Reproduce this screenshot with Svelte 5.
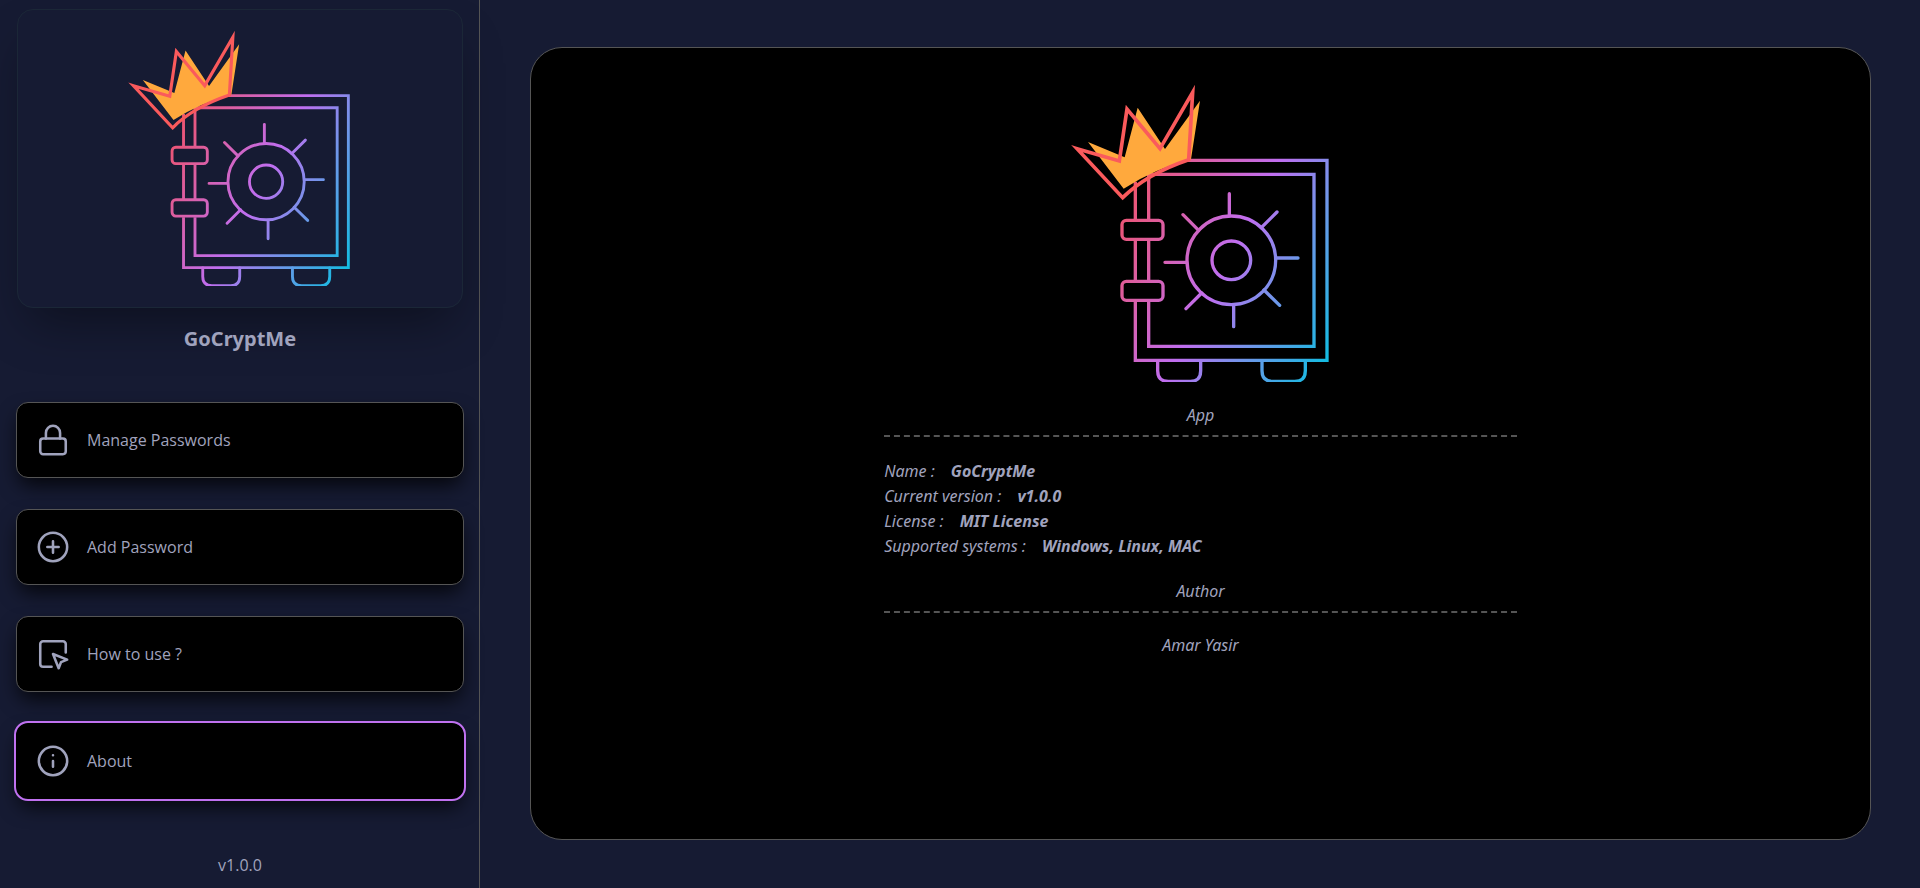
<script>
  let active = $state('About');

  const items = ['Manage Passwords', 'Add Password', 'How to use ?', 'About'];

  const details = [
    ['Name', 'GoCryptMe'],
    ['Current version', 'v1.0.0'],
    ['License', 'MIT License'],
    ['Supported systems', 'Windows, Linux, MAC'],
  ];
</script>

{#snippet logo(id)}
  <svg class="logo" viewBox="4 0 900 936" role="img" aria-label="GoCryptMe logo">
    <defs>
      <linearGradient id={id} gradientUnits="userSpaceOnUse" x1="337" y1="174" x2="1012" y2="523">
        <stop offset="0" stop-color="#ee5470" />
        <stop offset="0.47" stop-color="#c06ef0" />
        <stop offset="0.7" stop-color="#7295ea" />
        <stop offset="1" stop-color="#14bce2" />
      </linearGradient>
    </defs>
    <g fill="none" stroke="url(#{id})" stroke-width="10" stroke-linecap="round">
      <path d="M415 271H832V871H257V695M257 632V511M257 448V335" stroke-linecap="butt" />
      <path d="M297 448V313H793V829H297V695M297 511V632" stroke-linecap="butt" />
      <rect x="217" y="451" width="123" height="57" rx="13" />
      <rect x="217" y="634" width="123" height="57" rx="13" />
      <path d="M324 872V902Q324 934 356 934H422Q453 934 453 902V872M637 872V902Q637 934 669 934H735Q767 934 767 902V872" />
      <circle cx="545" cy="571" r="133" />
      <circle cx="545" cy="571" r="58" />
      <path d="M539 371V436M682 426L635 473M745 564H680M690 706L643 660M552 770V706M409 716L456 669M346 577H411M400 434L447 481" />
    </g>
    <path fill="#ffa93d" d="M115 216L225 262L264 113L346 237L451 92L424 268Q316 296 222 356Z" />
    <path fill="none" stroke="#fa5a5c" stroke-width="11" stroke-miterlimit="10" d="M82 236L209 273L232 117L331 236L429 67L417 269Q290 312 219 383Z" />
  </svg>
{/snippet}

<div class="app">
  <aside>
    <div class="brand">{@render logo('side-gradient')}</div>
    <h1>GoCryptMe</h1>
    <nav>
      {#each items as item, i}
        <button type="button" class:active={active === item} onclick={() => (active = item)}>
          <svg class="icon" viewBox="0 0 24 24" aria-hidden="true">
            {#if i === 0}
              <rect x="3" y="11" width="18" height="11" rx="2" />
              <path d="M7 11V7a5 5 0 0 1 10 0v4" />
            {:else if i === 1}
              <circle cx="12" cy="12" r="10" />
              <path d="M8 12h8M12 8v8" />
            {:else if i === 2}
              <path d="M21 11V5a2 2 0 0 0-2-2H5a2 2 0 0 0-2 2v14a2 2 0 0 0 2 2h6" />
              <path d="m12 12 4 10 1.700-4.300L22 16Z" />
            {:else}
              <circle cx="12" cy="12" r="10" />
              <path d="M12 16v-4M12 8h.01" />
            {/if}
          </svg>
          <span>{item}</span>
        </button>
      {/each}
    </nav>
    <p class="version">v1.0.0</p>
  </aside>

  <main>
    <section class="panel">
      {@render logo('main-gradient')}
      <div class="about">
        <h2>App</h2>
        <ul>
          {#each details as [label, value]}
            <li><span>{label} :</span><strong>{value}</strong></li>
          {/each}
        </ul>
        <h2>Author</h2>
        <p>Amar Yasir</p>
      </div>
    </section>
  </main>
</div>

<style>
  :global(body) {
    margin: 0;
    background: #161b33;
  }

  .app {
    display: grid;
    grid-template-columns: 1fr 3fr;
    min-height: 100vh;
    color: #a0a3bd;
    font: 16px/24px 'Noto Sans', 'Open Sans', sans-serif;
  }

  * {
    box-sizing: border-box;
  }

  h1,
  h2,
  p,
  ul {
    margin: 0;
    padding: 0;
  }

  .logo {
    display: block;
  }

  aside {
    display: flex;
    flex-direction: column;
    padding: 9px 15px 11px 16px;
    border-right: 1px solid #555;
  }

  .brand {
    display: flex;
    justify-content: center;
    margin: 0 1px;
    padding: 8px 0 21px;
    border: 1px solid #1b2737;
    border-radius: 16px;
    box-shadow: 0 25px 50px -12px rgb(0 0 0 / 0.4);
  }

  .brand .logo {
    width: 258px;
  }

  h1 {
    margin-top: 17px;
    font-size: 20px;
    line-height: 28px;
    text-align: center;
  }

  nav {
    display: grid;
    gap: 31px;
    margin-top: 49px;
  }

  button {
    display: flex;
    align-items: center;
    gap: 17px;
    height: 76px;
    padding: 0 19px;
    border: 1px solid #555;
    border-radius: 12px;
    background: #000;
    color: inherit;
    font: 16px/24px 'Open Sans', 'Noto Sans', sans-serif;
    text-align: left;
    cursor: pointer;
    box-shadow: 0 10px 20px -3px rgb(0 0 0 / 0.8);
  }

  button.active {
    border-color: #000;
    outline: 2px solid #c071f0;
  }

  .icon {
    width: 34px;
    height: 34px;
    fill: none;
    stroke: currentColor;
    stroke-width: 1.8;
    stroke-linecap: round;
    stroke-linejoin: round;
  }

  .version {
    margin-top: auto;
    font-family: 'Open Sans', 'Noto Sans', sans-serif;
    text-align: center;
  }

  main {
    display: flex;
    padding: 47px 49px 48px 50px;
  }

  .panel {
    display: flex;
    flex: 1;
    flex-direction: column;
    align-items: center;
    padding: 22px 24px;
    border: 1px solid #555;
    border-radius: 32px;
    background: #000;
  }

  .panel .logo {
    width: 300px;
  }

  .about {
    width: 49%;
    min-width: min(632px, 100%);
    margin-top: 21px;
    font-style: italic;
  }

  .about h2 {
    padding-bottom: 8px;
    border-bottom: 2px dashed #555;
    font-size: 16px;
    font-weight: 400;
    text-align: center;
  }

  ul {
    margin: 22px 0 20px;
    list-style: none;
  }

  li {
    display: flex;
    gap: 16px;
    line-height: 25px;
  }

  .about p {
    margin-top: 20px;
    text-align: center;
  }
</style>
